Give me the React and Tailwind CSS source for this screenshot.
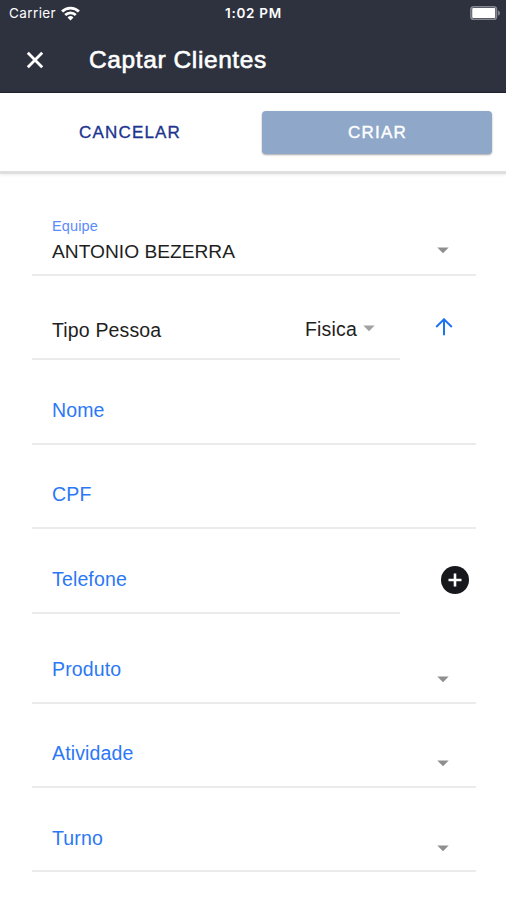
import { useState } from 'react';

function Caret({ className = '' }) {
  return (
    <svg viewBox="0 0 12 7" className={`w-3 h-[7px] shrink-0 ${className}`}>
      <path d="M0.3 0.5h11.4L6 6.3z" fill="currentColor" />
    </svg>
  );
}

function StatusBar() {
  return (
    <div className="h-[27px] pl-[9px] pr-2 grid grid-cols-3 items-center text-white font-['Inter',sans-serif]">
      <div className="flex items-center gap-[5px] text-[13.5px] tracking-[0.4px]">
        <span>Carrier</span>
        <svg viewBox="0 0 18 14" className="w-[19px] h-[15px] -mt-px" fill="none" stroke="currentColor" strokeWidth="2.6">
          <path d="M1 5.2a11.4 11.4 0 0 1 16 0" />
          <path d="M4 8.5a7.1 7.1 0 0 1 10 0" />
          <path d="M9 13.6L6.2 10.8a4 4 0 0 1 5.6 0z" fill="currentColor" stroke="none" />
        </svg>
      </div>
      <span className="justify-self-center text-[13.5px] font-semibold tracking-[0.7px] whitespace-nowrap">1:02 PM</span>
      <svg viewBox="0 0 32 14" className="justify-self-end w-8 h-[14px] -mr-[4px] -mt-px">
        <rect x="0.9" y="0.8" width="25.6" height="12.4" rx="2.8" fill="none" stroke="#858891" strokeWidth="1.6" />
        <rect x="2.2" y="2" width="23" height="10" rx="1" fill="white" />
        <path d="M28 4.4c2.6.9 2.6 4.3 0 5.2z" fill="#858891" />
      </svg>
    </div>
  );
}

function Campo({ label, select = false, short = false, className = '' }) {
  return (
    <div
      className={`border-b-2 border-[#ebebeb] pl-5 flex justify-between ${short ? 'w-[368px]' : 'w-full'} ${className}`}
    >
      <span className="text-[19.5px] leading-6 tracking-[0.15px] text-[#2b78f5]">{label}</span>
      {select && <Caret className="mt-[19px] mr-[27px] text-[#8f8f8f]" />}
    </div>
  );
}

export default function App() {
  const [equipe] = useState('ANTONIO BEZERRA');
  const [tipoPessoa] = useState('Fisica');

  return (
    <div className="w-full h-[900px] overflow-hidden bg-white font-['Liberation_Sans',Arial,sans-serif]">
      <header className="h-[93px] bg-[#2e323f] border-b border-[#20232f]">
        <StatusBar />
        <div className="h-[65px] pl-[26px] flex items-center text-white">
          <svg viewBox="0 0 18 18" className="w-[18px] h-[18px]" stroke="currentColor" strokeWidth="2.8">
            <path d="M1.8 1.8l14.4 14.4M16.2 1.8L1.8 16.2" />
          </svg>
          <h1 className="ml-[45px] text-[24.5px] leading-8 tracking-[0.6px] [-webkit-text-stroke:0.6px_white]">
            Captar Clientes
          </h1>
        </div>
      </header>

      <div className="h-[81px] pr-[14px] flex items-start border-b-3 border-[#dfdfdf] shadow-[0_1px_3px_rgba(0,0,0,0.08)]">
        <button className="w-[262px] h-[79px] pr-[2px] text-[17px] tracking-[1.2px] text-[#1c3490] [-webkit-text-stroke:0.35px_#1c3490]">
          CANCELAR
        </button>
        <button className="mt-[18px] flex-1 h-[43px] pl-px rounded-[4px] bg-[#8fa8c9] text-[17px] tracking-[1.2px] text-white [-webkit-text-stroke:0.4px_white] shadow-[0_1px_2px_rgba(0,0,0,0.35)]">
          CRIAR
        </button>
      </div>

      <main className="pl-8 pr-[30px]">
        <div className="h-[102px] pl-5 pt-[43px] pr-[27px] border-b-2 border-[#ebebeb]">
          <div className="text-[14.5px] leading-[18px] tracking-[0.15px] text-[#5a8cfb]">Equipe</div>
          <div className="mt-[5px] flex items-center justify-between text-[19.2px] leading-6 text-[#1e1e1e]">
            <span>{equipe}</span>
            <Caret className="-mt-[3px] text-[#8f8f8f]" />
          </div>
        </div>

        <div className="flex">
          <div className="w-[368px] h-[84px] pl-5 pr-[25px] pt-[41px] flex justify-between border-b-2 border-[#ebebeb] text-[19.5px] leading-6 text-[#1e1e1e]">
            <span className="pt-px tracking-[0.15px]">Tipo Pessoa</span>
            <span className="flex items-center gap-[6px] h-6 tracking-[0.2px]">
              {tipoPessoa}
              <Caret className="-mt-[2px] text-[#a2a2a2]" />
            </span>
          </div>
          <svg
            viewBox="0 0 18 18"
            className="mt-[42px] ml-[35px] w-[18px] h-[18px]"
            fill="none"
            stroke="#1d72f3"
            strokeWidth="2"
          >
            <path d="M9 17.2V1.5M1.2 9L9 1.3 16.8 9" />
          </svg>
        </div>

        <Campo label="Nome" className="h-[85px] pt-[38px]" />
        <Campo label="CPF" className="h-[84px] pt-[37px]" />
        <div className="flex">
          <Campo label="Telefone" short className="h-[85px] pt-[38px]" />
          <svg viewBox="0 0 28 28" className="mt-[37px] ml-[41px] w-7 h-7">
            <circle cx="14" cy="14" r="14" fill="#17181b" />
            <path d="M14 7.5v13M7.5 14h13" stroke="white" strokeWidth="2.6" />
          </svg>
        </div>
        <Campo label="Produto" select className="h-[90px] pt-[43px]" />
        <Campo label="Atividade" select className="h-[84px] pt-[37px]" />
        <Campo label="Turno" select className="h-[84px] pt-[38px]" />
      </main>
    </div>
  );
}
